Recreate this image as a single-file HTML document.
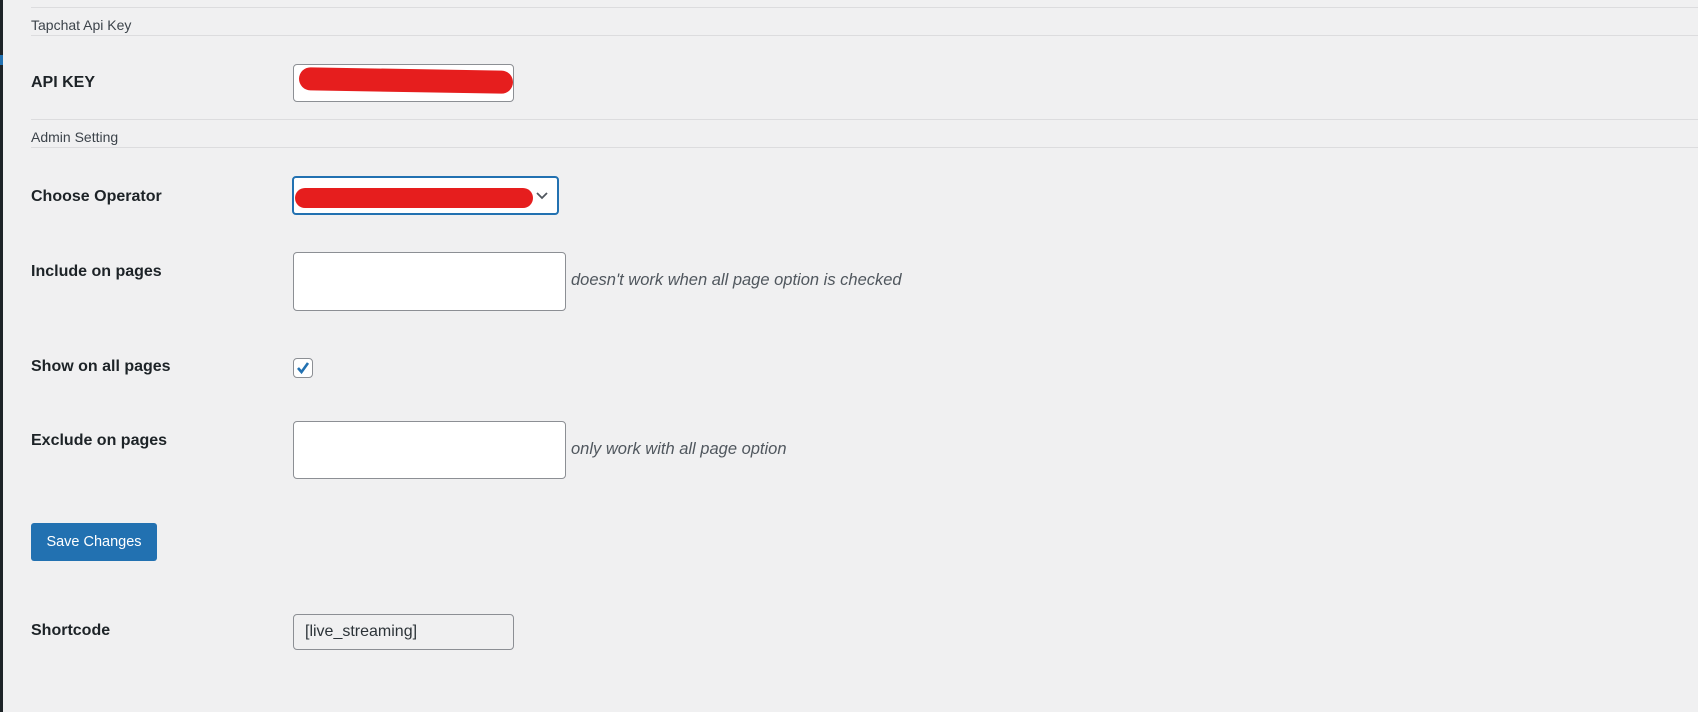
<!DOCTYPE html>
<html><head><style>
body{margin:0;width:1698px;height:712px;background:#f0f0f1;position:relative;overflow:hidden;font-family:"Liberation Sans",sans-serif;color:#1d2327}
.a{position:absolute}
.line{position:absolute;left:31px;right:0;height:1px;background:#dcdcde}
.h{position:absolute;left:31px;font-size:14px;color:#3c434a}
.l{position:absolute;left:31px;font-size:16px;font-weight:bold;color:#1d2327}
.in{position:absolute;background:#fff;border:1px solid #8c8f94;border-radius:4px;box-sizing:border-box}
.hint{position:absolute;font-style:italic;font-size:16.5px;color:#50575e}
</style></head><body>
<div class="a" style="left:0;top:0;width:3px;height:712px;background:#1d2327"></div>
<div class="a" style="left:0;top:55px;width:3px;height:10px;background:#2271b1"></div>
<div class="line" style="top:7px"></div>
<div class="h" style="top:17px">Tapchat Api Key</div>
<div class="line" style="top:35px"></div>
<div class="l" style="top:74px">API KEY</div>
<div class="in" style="left:293px;top:64px;width:221px;height:38px"></div>
<div class="a" style="left:299px;top:69px;width:214px;height:23px;background:#e61e1e;border-radius:12px;transform:rotate(1deg)"></div>
<div class="line" style="top:119px"></div>
<div class="h" style="top:129px">Admin Setting</div>
<div class="line" style="top:147px"></div>
<div class="l" style="top:188px">Choose Operator</div>
<div class="in" style="left:292px;top:176px;width:267px;height:39px;border:2px solid #2271b1"></div>
<div class="a" style="left:295px;top:188px;width:238px;height:20px;background:#e61e1e;border-radius:10px"></div>
<svg class="a" style="left:535px;top:191px" width="14" height="10"><path d="M2 2 L7 7 L12 2" stroke="#50575e" stroke-width="1.8" fill="none"/></svg>
<div class="l" style="top:263px">Include on pages</div>
<div class="in" style="left:293px;top:252px;width:273px;height:59px"></div>
<div class="hint" style="left:571px;top:271px">doesn't work when all page option is checked</div>
<div class="l" style="top:358px">Show on all pages</div>
<div class="in" style="left:293px;top:358px;width:20px;height:20px"></div>
<svg class="a" style="left:295px;top:360px" width="16" height="16"><path d="M3 8 L6.5 12 L13 3" stroke="#2271b1" stroke-width="2.6" fill="none"/></svg>
<div class="l" style="top:432px">Exclude on pages</div>
<div class="in" style="left:293px;top:421px;width:273px;height:58px"></div>
<div class="hint" style="left:571px;top:440px">only work with all page option</div>
<div class="a" style="left:31px;top:523px;width:126px;height:38px;background:#2271b1;border-radius:3px;color:#fff;font-size:14.5px;line-height:38px;text-align:center">Save Changes</div>
<div class="l" style="top:622px">Shortcode</div>
<div class="in" style="left:293px;top:614px;width:221px;height:36px;background:#f0f0f1;font-size:16px;color:#2c3338;padding:8px 0 0 11px">[live_streaming]</div>
</body></html>
